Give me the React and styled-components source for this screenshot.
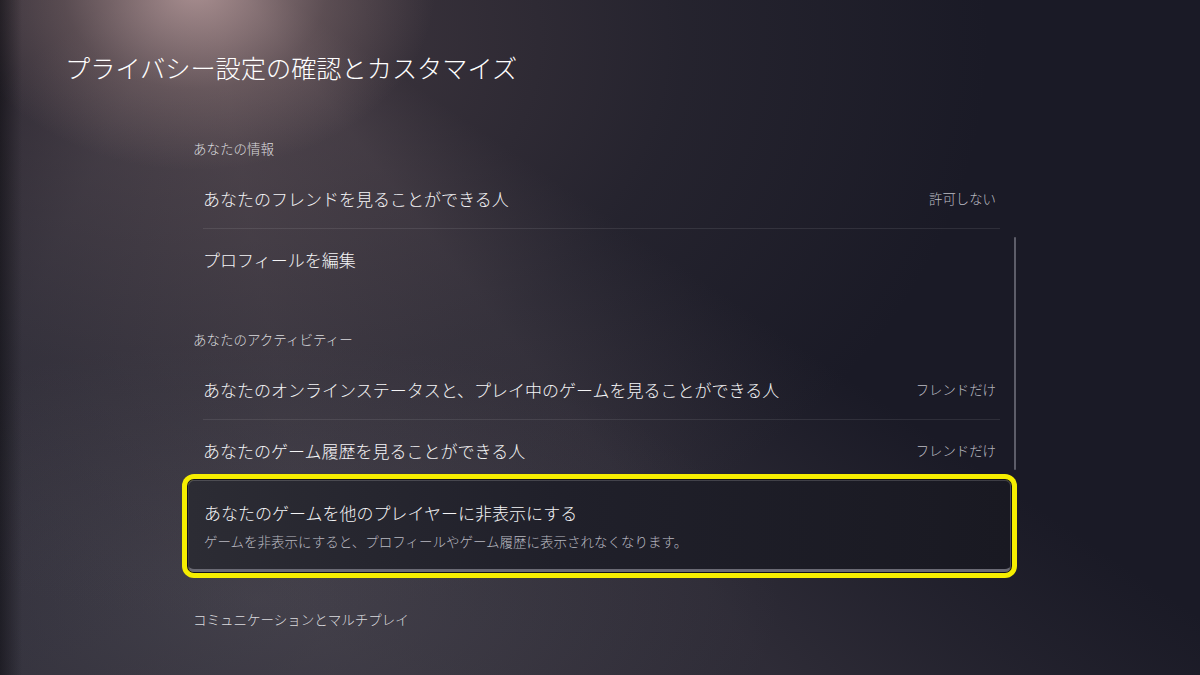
import React from 'react';
import styled, { createGlobalStyle } from 'styled-components';

const GlobalStyle = createGlobalStyle`
  html, body {
    margin: 0;
    padding: 0;
    background: #1b1b26;
  }
  * {
    box-sizing: border-box;
  }
`;

// --- STYLED COMPONENTS ---

const Page = styled.div`
  width: 1200px;
  height: 675px;
  overflow: hidden;
  font-family: "Noto Sans CJK JP", "Noto Sans", sans-serif;
  color: #f2f2f4;
  background-color: #1a1a26;
  background-image:
    linear-gradient(90deg, rgba(8, 8, 12, 0.5) 0, rgba(8, 8, 12, 0) 22px),
    radial-gradient(ellipse 240px 180px at 195px -10px, rgba(190, 160, 160, 0.8) 0%, rgba(145, 120, 120, 0.38) 55%, rgba(120, 100, 100, 0) 100%),
    radial-gradient(ellipse 760px 580px at 230px 40px, rgba(125, 102, 104, 0.4) 0%, rgba(90, 80, 86, 0.17) 60%, rgba(0, 0, 0, 0) 100%),
    conic-gradient(from 0deg at 200px -60px, rgba(0, 0, 0, 0) 124deg, rgba(110, 100, 108, 0.24) 142deg, rgba(115, 105, 112, 0.3) 170deg, rgba(100, 95, 105, 0.25) 205deg, rgba(0, 0, 0, 0) 235deg),
    radial-gradient(ellipse 520px 260px at 260px 600px, rgba(95, 95, 105, 0.3) 0%, rgba(0, 0, 0, 0) 100%);
`;

const Header = styled.header`
  padding: 50px 0 0 65px;
`;

const Title = styled.h1`
  margin: 0;
  font-size: 25.2px;
  line-height: 35px;
  font-weight: 300;
  color: #ffffff;
`;

const Column = styled.main`
  position: relative;
  width: 823px;
  margin: 53px 0 0 188px;
`;

const Section = styled.section`
  display: flex;
  flex-direction: column;
  margin-top: ${p => p.$top || 0}px;
`;

const SectionLabel = styled.div`
  padding-left: 5px;
  font-size: 13.5px;
  line-height: 20px;
  font-weight: 300;
  color: #dadade;
  margin-bottom: 10px;
`;

const Row = styled.div`
  height: ${p => (p.$divider ? 61 : 60)}px;
  padding: 0 11px 0 15px;
`;

const RowInner = styled.div`
  height: 100%;
  display: flex;
  align-items: center;
  justify-content: space-between;
  padding-right: 4px;
  border-bottom: ${p => (p.$divider ? '1px solid rgba(255, 255, 255, 0.09)' : 'none')};
`;

const RowText = styled.span`
  font-size: 17px;
  font-weight: 300;
  color: #f4f4f6;
`;

const RowValue = styled.span`
  font-size: 13.4px;
  font-weight: 300;
  color: #bdbdc4;
`;

const FocusCard = styled.div`
  height: 92px;
  padding: 21px 15px 0;
  border-radius: 6px;
  border: 1px solid rgba(255, 255, 255, 0.16);
  border-bottom: 3px solid #6a6a74;
  background: linear-gradient(90deg, #2c2c34 0%, #20202a 45%, #191922 100%);
  box-shadow: 0 0 0 1px #121219, 0 0 0 6px #f6ee00;
`;

const CardTitle = styled.div`
  font-size: 17px;
  line-height: 22px;
  font-weight: 300;
  color: #f4f4f6;
`;

const CardSub = styled.div`
  margin-top: 7px;
  font-size: 13.5px;
  line-height: 20px;
  font-weight: 300;
  color: #b8b8c0;
`;

const ScrollTrack = styled.div`
  position: absolute;
  left: 826px;
  top: 99px;
  width: 2px;
  height: 233px;
  border-radius: 1px;
  background: rgba(150, 150, 160, 0.55);
`;

const sections = [
  {
    label: 'あなたの情報',
    rows: [
      { text: 'あなたのフレンドを見ることができる人', value: '許可しない' },
      { text: 'プロフィールを編集' },
    ],
  },
  {
    label: 'あなたのアクティビティー',
    rows: [
      { text: 'あなたのオンラインステータスと、プレイ中のゲームを見ることができる人', value: 'フレンドだけ' },
      { text: 'あなたのゲーム履歴を見ることができる人', value: 'フレンドだけ' },
    ],
    focus: {
      title: 'あなたのゲームを他のプレイヤーに非表示にする',
      sub: 'ゲームを非表示にすると、プロフィールやゲーム履歴に表示されなくなります。',
    },
  },
  {
    label: 'コミュニケーションとマルチプレイ',
    rows: [],
  },
];

const App = () => {
  return (
    <Page>
      <GlobalStyle />
      <Header>
        <Title>プライバシー設定の確認とカスタマイズ</Title>
      </Header>
      <Column>
        <ScrollTrack />
        {sections.map((section, si) => (
          <Section key={section.label} $top={si === 0 ? 0 : si === 1 ? 40 : 37}>
            <SectionLabel>{section.label}</SectionLabel>
            {section.rows.map((row, ri) => {
              const divider = ri < section.rows.length - 1;
              return (
                <Row key={row.text} $divider={divider}>
                  <RowInner $divider={divider}>
                    <RowText>{row.text}</RowText>
                    {row.value && <RowValue>{row.value}</RowValue>}
                  </RowInner>
                </Row>
              );
            })}
            {section.focus && (
              <FocusCard>
                <CardTitle>{section.focus.title}</CardTitle>
                <CardSub>{section.focus.sub}</CardSub>
              </FocusCard>
            )}
          </Section>
        ))}
      </Column>
    </Page>
  );
};

export default App;
